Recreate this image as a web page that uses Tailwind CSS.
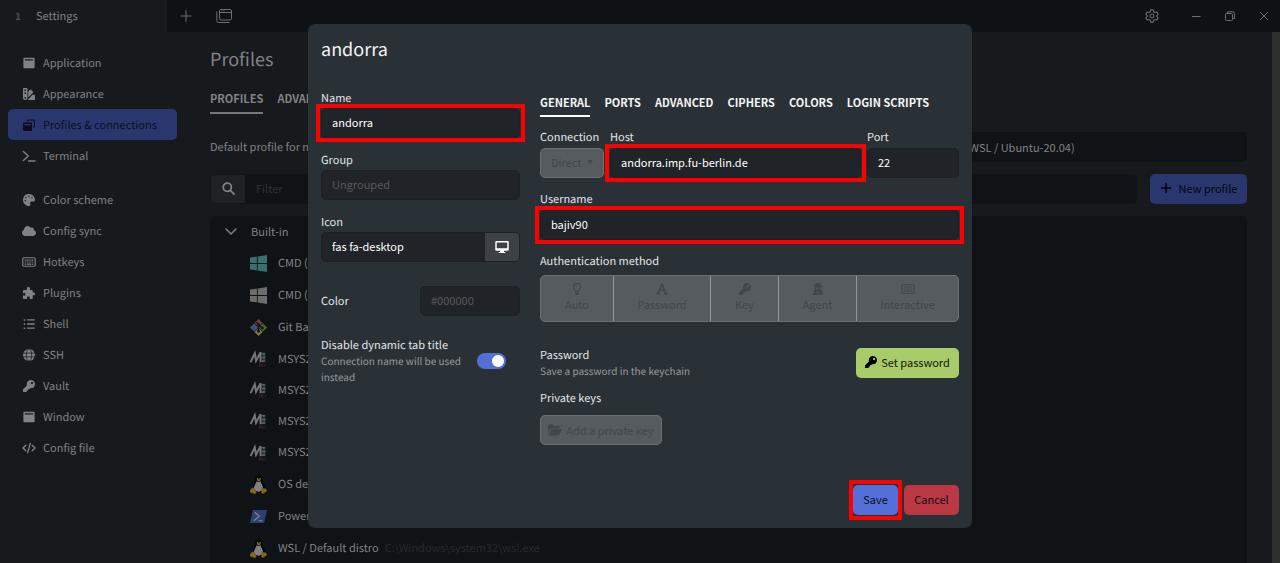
<!DOCTYPE html>
<html lang="en">
<head>
<meta charset="utf-8">
<title>Settings</title>
<script src="https://cdn.jsdelivr.net/npm/@tailwindcss/browser@4"></script>
</head>
<body class="bg-[#161a1c] text-[11px] leading-4 text-[#808284] font-['Noto_Sans_CJK_SC',sans-serif] [text-rendering:geometricPrecision]">
<svg class="hidden" aria-hidden="true">
  <symbol id="i-window" viewBox="0 0 16 16"><path fill-rule="evenodd" d="M2 1h12a1.500 1.500 0 0 1 1.500 1.500v11a1.500 1.500 0 0 1-1.500 1.500H2A1.500 1.500 0 0 1 .5 13.500v-11A1.500 1.500 0 0 1 2 1zM2.500 3v1.500h11V3z"/></symbol>
  <symbol id="i-swatch" viewBox="0 0 16 16"><path fill-rule="evenodd" d="M1 0h4a1 1 0 0 1 1 1v12a3 3 0 0 1-6 0V1a1 1 0 0 1 1-1zM2 2v2h2V2zM2 6v2h2V6zM3 12a1 1 0 1 0 .01 0z"/><path d="M7 4.500 9.300 2.300a1 1 0 0 1 1.400 0l2.600 2.600a1 1 0 0 1 0 1.400L7 12.500zM12.800 9H15a1 1 0 0 1 1 1v5a1 1 0 0 1-1 1H6z"/></symbol>
  <symbol id="i-restore" viewBox="0 0 16 16"><path d="M5 3a2.500 2.500 0 0 1 2-2.500h6.500A2.500 2.500 0 0 1 16 3v6a2.500 2.500 0 0 1-2.500 2.500V10c.6 0 1-.4 1-1V3c0-.6-.4-1-1-1H7.500c-.6 0-1 .4-1 1v.5H5z"/><path fill-rule="evenodd" d="M1.500 4.500h9A1.500 1.500 0 0 1 12 6v8.500a1.500 1.500 0 0 1-1.500 1.500h-9A1.500 1.500 0 0 1 0 14.500V6a1.500 1.500 0 0 1 1.500-1.500zM1.800 6.500v1.700h8.400V6.500z"/></symbol>
  <symbol id="i-terminal" viewBox="0 0 18 16"><path d="M1.500 2 8 8l-6.500 6M8.500 14.500H17" fill="none" stroke="currentColor" stroke-width="2" stroke-linecap="round" stroke-linejoin="round"/></symbol>
  <symbol id="i-palette" viewBox="0 0 512 512"><path d="M204.3 5C104.9 24.4 24.8 104.300 5.200 203.400c-37 187 131.700 326.400 258.800 306.700 41.200-6.400 61.400-54.600 42.500-91.700-23.100-45.400 9.900-98.400 60.900-98.400h79.700c35.800 0 64.800-29.600 64.900-65.300C511.500 97.100 368.100-26.900 204.300 5zM96 320c-17.700 0-32-14.300-32-32s14.300-32 32-32 32 14.300 32 32-14.300 32-32 32zm32-128c-17.700 0-32-14.300-32-32s14.300-32 32-32 32 14.300 32 32-14.300 32-32 32zm128-64c-17.700 0-32-14.300-32-32s14.300-32 32-32 32 14.300 32 32-14.300 32-32 32zm128 64c-17.700 0-32-14.300-32-32s14.300-32 32-32 32 14.300 32 32-14.300 32-32 32z"/></symbol>
  <symbol id="i-cloud" viewBox="0 0 640 512"><path d="M537.600 226.600c4.100-10.700 6.400-22.400 6.400-34.600 0-53-43-96-96-96-19.700 0-38.100 6-53.300 16.200C367 64.200 315.300 32 256 32c-88.400 0-160 71.600-160 160 0 2.700.1 5.400.2 8.100C40.200 219.800 0 273.200 0 336c0 79.500 64.500 144 144 144h368c70.700 0 128-57.300 128-128 0-61.900-44-113.600-102.400-125.400z"/></symbol>
  <symbol id="i-keyboard" viewBox="0 0 18 14"><rect x="1" y="1.500" width="16" height="11" rx="1.500" fill="none" stroke="currentColor" stroke-width="1.500"/><path d="M3.500 4.500h11M3.500 7h11" stroke="currentColor" stroke-width="1.600" stroke-dasharray="1.600 .75"/><path d="M3.500 9.700h1.600M6 9.700h6M12.900 9.700h1.600" stroke="currentColor" stroke-width="1.600"/></symbol>
  <symbol id="i-puzzle" viewBox="0 0 16 16"><path d="M5.800 4C5.500 3.400 5 3 5 2.100 5 .8 6.100 0 7.300 0s2.200.8 2.200 2.100c0 .9-.6 1.300-.8 1.900H12c.6 0 1 .4 1 1v2.600c.5 0 .9-.7 1.500-.7.9 0 1.500 1 1.500 2.100s-.6 2.200-1.500 2.200c-.6 0-1-.7-1.500-.7V15c0 .6-.4 1-1 1H8.500c-.1-.6.700-.9.700-1.700 0-.9-.9-1.500-2-1.500s-2 .6-2 1.500c0 .8.8 1.100.7 1.700H1c-.6 0-1-.4-1-1v-4c.6-.1.900.8 1.700.8.900 0 1.500-.8 1.500-2s-.6-2-1.500-2C.9 7.800.6 8.600 0 8.500V5c0-.6.4-1 1-1z"/></symbol>
  <symbol id="i-list" viewBox="0 0 16 16"><path d="M1 1.500h2v2H1zM1 7h2v2H1zM1 12.500h2v2H1z"/><path d="M5.500 2.500h10M5.500 8h10M5.500 13.500h10" stroke="currentColor" stroke-width="1.800"/></symbol>
  <symbol id="i-globe" viewBox="0 0 16 16"><circle cx="8" cy="8" r="8"/><path d="M0 5.500h16M0 10.500h16" stroke="#161a1c" stroke-width="1"/><ellipse cx="8" cy="8" rx="3.600" ry="8.300" fill="none" stroke="#161a1c" stroke-width="1"/></symbol>
  <symbol id="i-key" viewBox="0 0 512 512"><path d="M512 176.001C512 273.203 433.202 352 336 352c-11.220 0-22.190-1.062-32.827-3.069l-24.012 27.014A23.999 23.999 0 0 1 261.223 384H224v40c0 13.255-10.745 24-24 24h-40v40c0 13.255-10.745 24-24 24H24c-13.255 0-24-10.745-24-24v-78.059c0-6.365 2.529-12.470 7.029-16.971l161.802-161.802C163.108 213.814 160 195.271 160 176 160 78.798 238.797.001 335.999 0 433.488-.001 512 78.511 512 176.001zM336 128c0 26.510 21.490 48 48 48s48-21.490 48-48-21.490-48-48-48-48 21.490-48 48z"/></symbol>
  <symbol id="i-code" viewBox="0 0 20 16"><path d="M5.500 4 1.500 8l4 4M14.500 4l4 4-4 4M11.800 1.500 8.200 14.500" fill="none" stroke="currentColor" stroke-width="1.900" stroke-linecap="round" stroke-linejoin="round"/></symbol>
  <symbol id="i-search" viewBox="0 0 16 16"><path d="M11.500 6.500a5 5 0 1 1-10 0 5 5 0 0 1 10 0zM10.300 10.300l4.500 4.500" fill="none" stroke="currentColor" stroke-width="2.200" stroke-linecap="round"/></symbol>
  <symbol id="i-win" viewBox="0 0 18 18"><path d="M0 2.700 7.300 1.600v6.900H0zM8.200 1.500 18 0v8.500H8.200zM0 9.400h7.300v7L0 15.300zM8.200 9.400H18V18l-9.800-1.500z"/></symbol>
  <symbol id="i-git" viewBox="0 0 18 18"><path d="M9 0 13.300 4.300 9 8.600 4.700 4.300z" fill="#7a3a36"/><path d="M4.300 4.700 8.600 9l-4.300 4.300L0 9z" fill="#3f5180"/><path d="M13.700 4.700 18 9l-4.300 4.300L9.400 9z" fill="#436637"/><path d="M9 9.400l4.300 4.300L9 18l-4.300-4.300z" fill="#807440"/><path d="M6.500 3 9 5.500V13M9 6l4 4" fill="none" stroke="#0f1315" stroke-width="1.300"/><circle cx="9" cy="13" r="1.500" fill="#0f1315"/><circle cx="13" cy="9.500" r="1.500" fill="#0f1315"/><circle cx="9" cy="6" r="1.400" fill="#0f1315"/></symbol>
  <symbol id="i-msys" viewBox="0 0 18 18"><path d="M1.500 12.500 5.500 4l1.200 7L11 3v9.500" fill="none" stroke="#747677" stroke-width="1.900"/><path d="M13 3.500h2.500v9H13z" fill="#3a3d3f"/><path d="M12 4.500h3M12 8h3.500M12 11.500h3" stroke="#5d6061" stroke-width="1.500"/><path d="M10 17v-3l1.500 1.500 1.500-1.500v3M15.300 14v3" fill="none" stroke="#3f1d1f" stroke-width="1"/></symbol>
  <symbol id="i-tux" viewBox="0 0 18 20"><path d="M9 0c2.500 0 3.300 1.700 3.300 4 0 2.500 3.400 5.500 3.400 9.500 0 3-2.500 5-6.500 5s-6.700-2-6.700-5C2.500 10 5.700 7 5.700 4.200 5.700 1.700 6.600 0 9 0z" fill="#050607"/><path d="M7 6.500c1.500 1.300 3 1 4.200 0 .3 2 2.500 4.500 2.500 7 0 2.500-2 4-4.500 4s-5-1.500-5-4c0-2.500 2.600-5 2.800-7z" fill="#808080"/><path d="M7.300 3.200h1.200v1.500H7.300zM10 3.200h1.200v1.500H10z" fill="#777"/><path d="M7 5.200 9.200 4l2.300 1.200L9.200 7z" fill="#80691c"/><path d="M0 15.800 3.300 13 7 18c-.5 2-2.300 2-3.500 1.500L.3 18.500zM12.500 14l4 .2 1.500 2.600-3.700 2.700c-1.500.6-2.300-.3-2.300-1.500z" fill="#80691c"/></symbol>
  <symbol id="i-ps" viewBox="0 0 18 14"><path d="M3 0H18l-3 14H0z" fill="#2c3f72"/><path d="m5 2.500 5 4.300L4 11.500M9 11.500h4" fill="none" stroke="#85888e" stroke-width="1.200"/></symbol>
  <symbol id="i-plus" viewBox="0 0 16 16"><path d="M8 2v12M2 8h12" stroke="currentColor" stroke-width="2" stroke-linecap="round"/></symbol>
  <symbol id="i-desktop" viewBox="0 0 18 16"><path fill-rule="evenodd" d="M1.500 0h15A1.500 1.500 0 0 1 18 1.500v10a1.500 1.500 0 0 1-1.500 1.500h-5.200l.4 1.500h1.800V16h-9v-1.500h1.800l.4-1.500H1.500A1.500 1.500 0 0 1 0 11.500v-10A1.500 1.500 0 0 1 1.500 0zM2 2v7.500h14V2z"/></symbol>
  <symbol id="i-bulb" viewBox="0 0 12 16"><path d="M4 11C4 8.800 1.300 8 1.300 5.200a4.700 4.700 0 0 1 9.400 0C10.700 8 8 8.800 8 11zM4 5.500C4 4.300 4.800 3.500 6 3.500" fill="none" stroke="currentColor" stroke-width="1.400"/><path d="M3.500 12.500h5V14A2 2 0 0 1 6.500 16h-1a2 2 0 0 1-2-2z"/></symbol>
  <symbol id="i-font" viewBox="0 0 16 16"><path d="M2.500 14 8 1.500 13.500 14M4.500 10h7M.5 14.200h5M10.500 14.200h5" fill="none" stroke="currentColor" stroke-width="2.200"/></symbol>
  <symbol id="i-agent" viewBox="0 0 16 16"><path fill-rule="evenodd" d="M5.500 0c1 0 1.500.6 2.500.6S9.500 0 10.500 0c.8 0 1.400 1.500 1.700 3.500H14V5h-1.500v2.500L12 9l2.500 1-1 2 1.500 4H1l1.500-4-1-2L4 9l-.5-1.500V5H2V3.500h1.800C4.100 1.500 4.700 0 5.500 0zM5 6v1.500h2.500V6zM8.500 6v1.500H11V6zM6 10.500l1 5h.500v-3zM10 10.500l-1 5h-.5v-3z"/></symbol>
  <symbol id="i-folder" viewBox="0 0 18 14"><path d="M0 11V1.500A1.500 1.500 0 0 1 1.500 0H6l2 2h5.500A1.500 1.500 0 0 1 15 3.500V5H5.200A3 3 0 0 0 2.700 6.500z"/><path d="M5.200 6H17.500a.5.500 0 0 1 .4.800L14.500 13a2 2 0 0 1-1.700 1H1.200a.5.500 0 0 1-.4-.8l3-6.300A1.700 1.700 0 0 1 5.200 6z"/></symbol>
</svg>

<div class="flex h-screen flex-col overflow-hidden">
  <header class="flex h-8 shrink-0 items-center bg-[#0e1214]">
    <div class="flex h-8 w-[167px] items-center bg-[#161a1c] pl-[15px]">
      <span class="w-[21px] text-[10px] font-bold text-[#4a4d4f]">1</span><span>Settings</span>
    </div>
    <button aria-label="New tab" class="ml-3 text-[#6c6e70]"><svg class="size-[14px]" viewBox="0 0 14 14"><path d="M7 1.500v11M1.500 7h11" stroke="currentColor"/></svg></button>
    <button aria-label="Profile selector" class="ml-[23px] text-[#6c6e70]"><svg class="size-4" viewBox="0 0 16 16" fill="none" stroke="currentColor"><rect x="3.500" y="1.500" width="12" height="10.500" rx="1.500"/><path d="M3.500 4.500h12M5.500 3h1M7.500 3h1M.8 3.500v9a2 2 0 0 0 2 2h10.700"/></svg></button>
    <div class="ml-auto flex items-center pr-[11px] text-[#6c6e70]">
      <button aria-label="Settings"><svg class="size-[14px]" viewBox="0 0 16 16" fill="none" stroke="currentColor" stroke-width="1.200" stroke-linejoin="round"><path d="M6.500 1h3l.5 2.200 1.400.8 2.200-.7 1.500 2.600L13.500 7.500v1l1.600 1.600-1.500 2.600-2.200-.7-1.400.8L9.500 15h-3L6 12.800 4.600 12l-2.200.7L.9 10.100 2.500 8.500v-1L.9 5.900l1.500-2.600 2.200.7L6 3.200z"/><circle cx="8" cy="8" r="2.200"/></svg></button>
      <button aria-label="Minimize" class="ml-8"><svg class="size-[10px]" viewBox="0 0 10 10"><path d="M1 5.500h8.500" stroke="currentColor"/></svg></button>
      <button aria-label="Restore" class="ml-6"><svg class="size-[10px]" viewBox="0 0 10 10" fill="none" stroke="currentColor"><rect x=".5" y="2.500" width="7" height="7" rx="1"/><path d="M2.500 2V.8h5.500A1.500 1.500 0 0 1 9.500 2.300V7.500H8"/></svg></button>
      <button aria-label="Close" class="ml-6"><svg class="size-[10px]" viewBox="0 0 10 10"><path d="m1 1 8 8M9 1 1 9" stroke="currentColor"/></svg></button>
    </div>
  </header>

  <div class="flex min-h-0 grow">
    <nav class="w-[177px] shrink-0 pt-[15px] pl-2" aria-label="Settings sections">
      <a href="#" class="flex h-[31px] items-center gap-[7px] pl-[14px]"><svg class="h-3 w-[14px] fill-current"><use href="#i-window"/></svg>Application</a>
      <a href="#" class="flex h-[31px] items-center gap-[7px] pl-[14px]"><svg class="h-3 w-[14px] fill-current"><use href="#i-swatch"/></svg>Appearance</a>
      <a href="#" class="flex h-[31px] items-center gap-[7px] rounded-[5px] bg-[#2a376f] pl-[14px] text-[#0c0f1a]"><svg class="h-3 w-[14px] fill-current"><use href="#i-restore"/></svg>Profiles &amp; connections</a>
      <a href="#" class="flex h-[31px] items-center gap-[7px] pl-[14px]"><svg class="h-3 w-[14px] fill-current"><use href="#i-terminal"/></svg>Terminal</a>
      <a href="#" class="mt-[13px] flex h-[31px] items-center gap-[7px] pl-[14px]"><svg class="h-3 w-[14px] fill-current"><use href="#i-palette"/></svg>Color scheme</a>
      <a href="#" class="flex h-[31px] items-center gap-[7px] pl-[14px]"><svg class="h-3 w-[14px] fill-current"><use href="#i-cloud"/></svg>Config sync</a>
      <a href="#" class="flex h-[31px] items-center gap-[7px] pl-[14px]"><svg class="h-3 w-[14px] fill-current"><use href="#i-keyboard"/></svg>Hotkeys</a>
      <a href="#" class="flex h-[31px] items-center gap-[7px] pl-[14px]"><svg class="h-3 w-[14px] fill-current"><use href="#i-puzzle"/></svg>Plugins</a>
      <a href="#" class="flex h-[31px] items-center gap-[7px] pl-[14px]"><svg class="h-3 w-[14px] fill-current"><use href="#i-list"/></svg>Shell</a>
      <a href="#" class="flex h-[31px] items-center gap-[7px] pl-[14px]"><svg class="h-3 w-[14px] fill-current"><use href="#i-globe"/></svg>SSH</a>
      <a href="#" class="flex h-[31px] items-center gap-[7px] pl-[14px]"><svg class="h-3 w-[14px] fill-current"><use href="#i-key"/></svg>Vault</a>
      <a href="#" class="flex h-[31px] items-center gap-[7px] pl-[14px]"><svg class="h-3 w-[14px] fill-current"><use href="#i-window"/></svg>Window</a>
      <a href="#" class="flex h-[31px] items-center gap-[7px] pl-[14px]"><svg class="h-3 w-[14px] fill-current"><use href="#i-code"/></svg>Config file</a>
    </nav>

    <main class="min-w-0 grow pr-[25px] pl-[33px]">
      <h1 class="pt-[15px] pb-px text-[18px] leading-6">Profiles</h1>
      <div class="mt-[18px] flex gap-[14px] text-[11px] font-bold" role="tablist">
        <button role="tab" aria-selected="true" class="h-6 border-b-2 border-[#76787a] pb-[6px]">PROFILES</button>
        <button role="tab" class="h-6 pb-2">ADVANCED</button>
      </div>
      <div class="mt-[18px] flex items-center">
        <label for="default-profile" class="w-[400px]">Default profile for new tabs</label>
        <select id="default-profile" class="h-[30px] grow appearance-none rounded-[5px] bg-[#101315] pl-[316px] leading-4"><option>Default (WSL / Ubuntu-20.04)</option></select>
      </div>
      <div class="mt-3 flex gap-[13px]">
        <div class="flex h-[30px] grow overflow-hidden rounded-[5px] border border-[#121517] bg-[#101315]">
          <label for="filter" class="flex w-[34px] items-center justify-center bg-[#1e2225] pb-px"><svg class="size-[13px]" role="img" aria-label="Filter"><use href="#i-search"/></svg></label>
          <input id="filter" placeholder="Filter" class="min-w-0 grow px-[11px] pb-[3px] placeholder:text-[#2e3235]">
        </div>
        <button class="flex h-[30px] w-[97px] items-center justify-center gap-[7px] rounded-[5px] bg-[#2a376f] pb-[2px] text-[#04050a]"><svg class="size-3"><use href="#i-plus"/></svg>New profile</button>
      </div>
      <section class="mt-3 rounded-t-[5px] bg-[#0f1315] pl-[14px]">
        <button class="flex h-[31px] items-center gap-[13px] pb-[2px]"><svg class="h-3 w-[14px]" viewBox="0 0 14 12"><path d="m2 4 5 5 5-5" fill="none" stroke="currentColor" stroke-width="1.500" stroke-linecap="round"/></svg>Built-in</button>
        <ul class="pl-[25px] whitespace-nowrap">
          <li class="flex h-8 items-center gap-[10px]"><svg class="size-[19px] py-px fill-[#39706f]"><use href="#i-win"/></svg>CMD (clink)</li>
          <li class="flex h-8 items-center gap-[10px]"><svg class="size-[19px] py-px fill-[#6c6c6c]"><use href="#i-win"/></svg>CMD (stock)</li>
          <li class="flex h-8 items-center gap-[10px]"><svg class="size-[19px] py-px"><use href="#i-git"/></svg>Git Bash</li>
          <li class="flex h-[31px] items-center gap-[10px]"><svg class="size-[19px]"><use href="#i-msys"/></svg>MSYS2 (CLANG64)</li>
          <li class="flex h-[31px] items-center gap-[10px]"><svg class="size-[19px]"><use href="#i-msys"/></svg>MSYS2 (MINGW32)</li>
          <li class="flex h-[31px] items-center gap-[10px]"><svg class="size-[19px]"><use href="#i-msys"/></svg>MSYS2 (MINGW64)</li>
          <li class="flex h-8 items-center gap-[10px]"><svg class="size-[19px]"><use href="#i-msys"/></svg>MSYS2 (MSYS)</li>
          <li class="flex h-8 items-center gap-[10px]"><svg class="size-[19px]"><use href="#i-tux"/></svg>OS default</li>
          <li class="flex h-8 items-center gap-[10px]"><svg class="size-[19px] p-px"><use href="#i-ps"/></svg>PowerShell</li>
          <li class="flex h-8 items-center gap-[10px]"><svg class="size-[19px]"><use href="#i-tux"/></svg>WSL / Default distro<span class="-ml-1 text-[#272b2d]">C:\Windows\system32\wsl.exe</span></li>
        </ul>
      </section>
    </main>
    <div class="w-2 shrink-0 bg-[#2c302f]"></div>
  </div>
</div>

<div class="absolute inset-0 flex items-start justify-center pt-6">
  <form role="dialog" aria-labelledby="dlg-title" class="w-[664px] rounded-[7px] bg-[#2a3136] px-[13px] pb-[13px] text-[#e4e6e8]">
    <h2 id="dlg-title" class="pt-[11px] pb-px text-[18px] leading-7 text-[#f4f5f6]">andorra</h2>
    <div class="flex gap-5">
      <div class="w-[199px] pt-6">
        <label for="name" class="block h-5 leading-5">Name</label>
        <div class="relative h-[30px]"><input id="name" value="andorra" class="size-full rounded-[5px] border border-[#1d2124] bg-[#202428] px-[10px] pb-[3px] text-white"><span class="pointer-events-none absolute -inset-x-[5px] -inset-y-1 border-4 border-[#ff0000]"></span></div>
        <label for="group" class="mt-3 block h-5 leading-5">Group</label>
        <input id="group" placeholder="Ungrouped" class="block h-[30px] w-full rounded-[5px] border border-[#1d2124] bg-[#202428] px-[10px] pb-[3px] placeholder:text-[#55595c]">
        <label for="icon" class="mt-3 block h-5 leading-5">Icon</label>
        <div class="flex h-[30px] overflow-hidden rounded-[5px] border border-[#1d2124] bg-[#202428]">
          <input id="icon" value="fas fa-desktop" class="min-w-0 grow px-[10px] pb-[3px] text-white">
          <span class="flex w-[34px] shrink-0 items-center justify-center bg-[#3c4145]"><svg class="h-3 w-[14px] fill-white"><use href="#i-desktop"/></svg></span>
        </div>
        <div class="mt-6 flex items-center justify-between">
          <label for="color">Color</label>
          <input id="color" placeholder="#000000" class="h-[30px] w-[100px] rounded-[5px] border border-[#1d2124] bg-[#202428] px-[10px] pb-[3px] placeholder:text-[#55595c]">
        </div>
        <div class="mt-[21px] flex items-center pr-[14px]">
          <label for="dyn" class="grow"><span class="block">Disable dynamic tab title</span><span class="block w-[146px] text-[10px] text-[#969a9d]">Connection name will be used instead</span></label>
          <input id="dyn" type="checkbox" role="switch" checked class="h-4 w-[29px] shrink-0 appearance-none rounded-full bg-[#5470d8] before:mt-[2px] before:ml-[15px] before:block before:size-3 before:rounded-full before:bg-white">
        </div>
      </div>

      <div class="min-w-0 grow pt-7">
        <div class="flex gap-[14px] text-[11px] font-bold text-[#f4f5f6]" role="tablist">
          <button type="button" role="tab" aria-selected="true" class="h-[25px] border-b-2 border-white pb-1">GENERAL</button>
          <button type="button" role="tab" class="h-[25px] pb-[6px]">PORTS</button>
          <button type="button" role="tab" class="h-[25px] pb-[6px]">ADVANCED</button>
          <button type="button" role="tab" class="h-[25px] pb-[6px]">CIPHERS</button>
          <button type="button" role="tab" class="h-[25px] pb-[6px]">COLORS</button>
          <button type="button" role="tab" class="h-[25px] pb-[6px]">LOGIN SCRIPTS</button>
        </div>
        <div class="mt-[11px] flex gap-[6px]">
          <div class="w-16"><label for="conn" class="block h-5 leading-[18px]">Connection</label>
            <div class="relative"><select id="conn" class="block h-[30px] w-full appearance-none rounded-[5px] border border-[#6c7174] bg-[#565b5f] pb-[3px] pl-[10px] text-[#42474b]"><option>Direct</option></select><svg class="pointer-events-none absolute top-3 right-[10px] h-[5px] w-2 fill-[#42474b]" viewBox="0 0 8 5"><path d="M1 0h6L4 4z"/></svg></div></div>
          <div class="min-w-0 grow"><label for="host" class="block h-5 leading-[18px]">Host</label>
            <div class="relative h-[30px]"><input id="host" value="andorra.imp.fu-berlin.de" class="size-full rounded-[5px] border border-[#1d2124] bg-[#202428] px-[10px] pb-[3px] text-white"><span class="pointer-events-none absolute -inset-x-[5px] -inset-y-1 border-4 border-[#ff0000]"></span></div></div>
          <div class="w-[92px]"><label for="port" class="block h-5 leading-[18px]">Port</label>
            <input id="port" value="22" class="block h-[30px] w-full rounded-[5px] border border-[#1d2124] bg-[#202428] px-[10px] pb-[3px] text-white"></div>
        </div>
        <label for="user" class="mt-3 block h-5 leading-[18px]">Username</label>
        <div class="relative h-[30px]"><input id="user" value="bajiv90" class="size-full rounded-[5px] border border-[#1d2124] bg-[#202428] px-[10px] pb-[3px] text-white"><span class="pointer-events-none absolute -inset-x-[5px] -inset-y-1 border-4 border-[#ff0000]"></span></div>
        <div class="mt-3 h-[23px] leading-[18px]">Authentication method</div>
        <div class="flex h-[47px] divide-x divide-[#95999b] overflow-hidden rounded-[5px] border border-[#6c7174] bg-[#565b5f] text-[#42474b]">
          <button type="button" class="flex w-[73px] flex-col items-center justify-center gap-px pb-[2px]"><svg class="h-3 w-[14px] fill-current"><use href="#i-bulb"/></svg>Auto</button>
          <button type="button" class="flex w-[97px] flex-col items-center justify-center gap-px pb-[2px]"><svg class="h-3 w-[14px] fill-current"><use href="#i-font"/></svg>Password</button>
          <button type="button" class="flex w-[68px] flex-col items-center justify-center gap-px pb-[2px]"><svg class="h-3 w-[14px] fill-current"><use href="#i-key"/></svg>Key</button>
          <button type="button" class="flex w-[78px] flex-col items-center justify-center gap-px pb-[2px]"><svg class="h-3 w-[14px] fill-current"><use href="#i-agent"/></svg>Agent</button>
          <button type="button" class="flex grow flex-col items-center justify-center gap-px pb-[2px]"><svg class="h-3 w-[14px] fill-current"><use href="#i-keyboard"/></svg>Interactive</button>
        </div>
        <div class="mt-[25px] flex items-center justify-between">
          <div><div>Password</div><div class="text-[10px] text-[#969a9d]">Save a password in the keychain</div></div>
          <button type="button" class="flex h-[30px] w-[103px] items-center justify-center gap-1 rounded-[5px] bg-[#a9cc6a] pb-[2px] text-[#12160c]"><svg class="size-3"><use href="#i-key"/></svg>Set password</button>
        </div>
        <div class="mt-[11px]">Private keys</div>
        <button type="button" class="mt-[9px] flex h-[30px] w-[122px] items-center justify-center gap-1 rounded-[5px] border border-[#6c7174] bg-[#565b5f] pb-px text-[#42474b]"><svg class="h-3 w-[14px] fill-current"><use href="#i-folder"/></svg>Add a private key</button>
      </div>
    </div>
    <div class="mt-10 flex justify-end gap-[6px] text-[#0c0e14]">
      <div class="relative h-[30px] w-[45px]"><button class="size-full rounded-[5px] bg-[#5470d8] pb-[2px]">Save</button><span class="pointer-events-none absolute -inset-x-1 -inset-y-[5px] border-4 border-[#ff0000]"></span></div>
      <button type="button" class="h-[30px] w-[55px] rounded-[5px] bg-[#ba3844] pb-[2px]">Cancel</button>
    </div>
  </form>
</div>
</body>
</html>
